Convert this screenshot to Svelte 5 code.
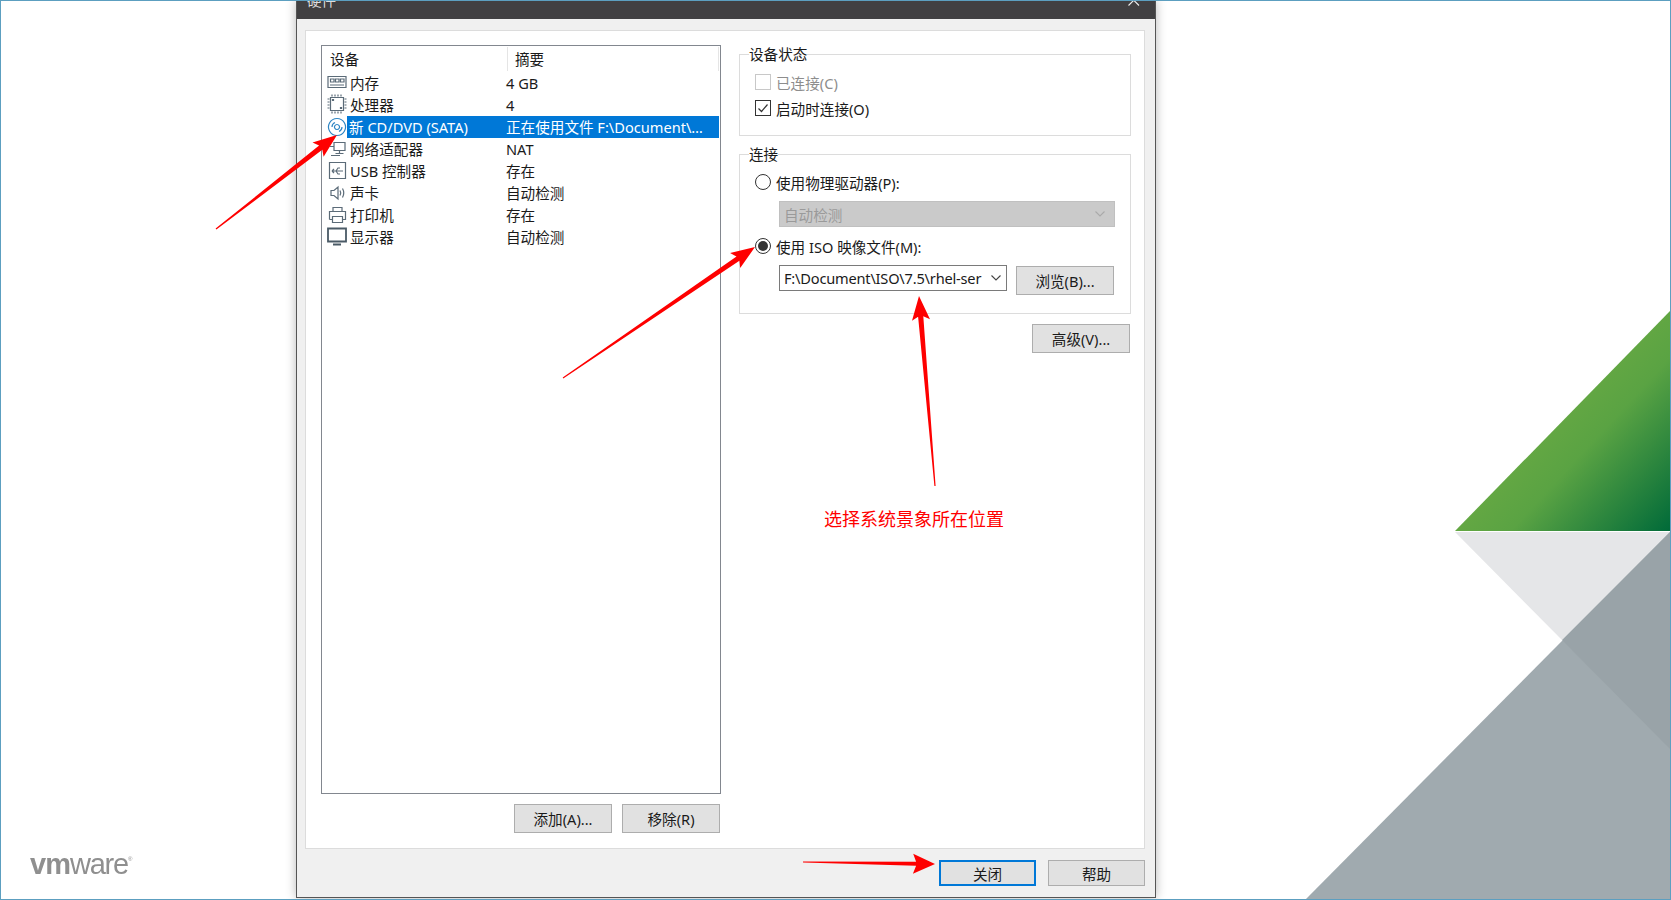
<script lang="ts">
  const rows = [
    { name: '内存', value: '4 GB', color: '#5b6b78', d: 'M1 4.5h18v11H1z M3.5 7h3.5v3H3.5z M8.5 7h3.5v3H8.5z M13.5 7h3.5v3h-3.5z M3 13h14' },
    { name: '处理器', value: '4', color: '#5b6b78', d: 'M3.5 3.5h13v13h-13z M5 .5v2 M8 .5v2 M11 .5v2 M14 .5v2 M5 17.5v2 M8 17.5v2 M11 17.5v2 M14 17.5v2 M.5 5h2 M.5 8h2 M.5 11h2 M.5 14h2 M17.5 5h2 M17.5 8h2 M17.5 11h2 M17.5 14h2 M5.5 5.5h1v1h-1z M13.5 13.5h1v1h-1z' },
    { name: '新 CD/DVD (SATA)', value: '正在使用文件 F:\\Document\\…', color: '#2f86c4', d: 'M10 2.5a8.5 8.5 0 1 0 .01 0z M10 8.5a2.5 2.5 0 1 0 .01 0z M5 11a5 5 0 0 1 3-4.5 M15 11a5 5 0 0 1-3 4.5', selected: true },
    { name: '网络适配器', value: 'NAT', color: '#5b6b78', d: 'M7 4.5h11v8H7z M12.5 12.5v3 M8.500 15.500h8 M7 8.500H3 M4 17.500h9' },
    { name: 'USB 控制器', value: '存在', color: '#5b6b78', d: 'M2.500 2.500h16v16h-16z M5 11h11 M5 11l2-2 M5 11l2 2 M9 11l2-3h2 M9 11l2 3h2' },
    { name: '声卡', value: '自动检测', color: '#5b6b78', d: 'M4 8.500v5h3l4 3.500V5L7 8.500z M13 8.500q1.500 2.500 0 5 M15.500 6.500q2.500 4.500 0 9' },
    { name: '打印机', value: '存在', color: '#5b6b78', d: 'M6 7V3.500h9V7 M2.500 15.500V7.500h16v8h-3 M5.500 15.500h-3 M5.500 12.500h10v6h-10z' },
    { name: '显示器', value: '自动检测', color: '#4a5a66', d: 'M1 2.500h18v13H1z M6 18.500h8', heavy: true }
  ];

  // tapered red annotation arrow, wide near the head
  const arrow = (x1: number, y1: number, x2: number, y2: number, head = 24, half = 9, neck = 2.6) => {
    const len = Math.hypot(x2 - x1, y2 - y1);
    const ux = (x2 - x1) / len;
    const uy = (y2 - y1) / len;
    const nx = -uy;
    const ny = ux;
    const bx = x2 - ux * head;
    const by = y2 - uy * head;
    const nbx = x2 - ux * head * 0.86;
    const nby = y2 - uy * head * 0.86;
    const pts = [
      [x1 + nx * 0.6, y1 + ny * 0.6],
      [nbx + nx * neck, nby + ny * neck],
      [bx + nx * half, by + ny * half],
      [x2, y2],
      [bx - nx * half, by - ny * half],
      [nbx - nx * neck, nby - ny * neck],
      [x1 - nx * 0.6, y1 - ny * 0.6]
    ];
    return pts.map((p) => p.map((v) => v.toFixed(1)).join(',')).join(' ');
  };

  const arrows = [
    arrow(216, 229, 337, 135),
    arrow(563, 378, 755, 247),
    arrow(935, 486, 919, 296),
    arrow(803, 862, 935, 864, 22, 10, 2)
  ];
</script>

<div class="page">
  <svg class="backdrop" width="1671" height="900" viewBox="0 0 1671 900" aria-hidden="true">
    <defs>
      <linearGradient id="green" gradientUnits="userSpaceOnUse" x1="1555" y1="425" x2="1670" y2="531">
        <stop offset="0" stop-color="#63a743" />
        <stop offset="0.25" stop-color="#5aa343" />
        <stop offset="1" stop-color="#006a39" />
      </linearGradient>
    </defs>
    <polygon points="1455,531 1670,311 1670,531" fill="url(#green)" />
    <polygon points="1455,532 1670,532 1562,640" fill="#e5e6e8" />
    <polygon points="1305,900 1670,532 1670,900" fill="#a0aaaf" />
    <polygon points="1562,640 1670,532 1670,749" fill="#99a3a8" />
  </svg>

  <aside class="brand"><b>vm</b>ware<sup>®</sup></aside>

  <section class="dialog">
    <header class="titlebar">
      <span class="title">硬件</span>
      <svg class="close-x" width="14" height="19" viewBox="0 0 14 19" aria-hidden="true">
        <path d="M1.500 -5L12 5.500M12 -5L1.500 5.500" stroke="#eee" stroke-width="1.100" fill="none" />
      </svg>
    </header>

    <main class="panel">
      <div class="left">
        <div class="list">
          <div class="list-head">
            <span class="col-name">设备</span>
            <span class="col-value">摘要</span>
          </div>
          {#each rows as row}
            <div class="row">
              <svg class="icon" width="20" height="22" viewBox="0 0 20 22" aria-hidden="true">
                <path d={row.d} fill="none" stroke={row.color} stroke-width={row.heavy ? 1.8 : 1.2} />
              </svg>
              <span class="name" class:selected={row.selected}>{row.name}</span>
              <span class="value" class:selected={row.selected}>{row.value}</span>
            </div>
          {/each}
        </div>
        <div class="list-actions">
          <button class="btn">添加(A)...</button>
          <button class="btn">移除(R)</button>
        </div>
      </div>

      <div class="right">
        <div class="group status">
          <span class="legend">设备状态</span>
          <div class="opt muted">
            <span class="check off"></span>已连接(C)
          </div>
          <div class="opt">
            <span class="check">
              <svg width="14" height="14" viewBox="0 0 14 14" aria-hidden="true">
                <path d="M2.500 7.500l3 3 6-7" fill="none" stroke="#333" stroke-width="1.200" />
              </svg>
            </span>启动时连接(O)
          </div>
        </div>

        <div class="group connect">
          <span class="legend">连接</span>
          <div class="opt radio-row">
            <span class="radio"></span>使用物理驱动器(P):
          </div>
          <div class="select disabled">
            <span>自动检测</span>
            <svg width="12" height="8" viewBox="0 0 12 8" aria-hidden="true">
              <path d="M1.500 1.500L6 6l4.500-4.500" fill="none" stroke="#aaa" stroke-width="1.100" />
            </svg>
          </div>
          <div class="opt radio-row">
            <span class="radio on"></span>使用 ISO 映像文件(M):
          </div>
          <div class="iso-row">
            <div class="select combo">
              <span>F:\Document\ISO\7.5\rhel-ser</span>
              <svg width="12" height="8" viewBox="0 0 12 8" aria-hidden="true">
                <path d="M1.500 1.500L6 6l4.500-4.500" fill="none" stroke="#444" stroke-width="1.100" />
              </svg>
            </div>
            <button class="btn browse">浏览(B)...</button>
          </div>
        </div>

        <div class="advanced">
          <button class="btn">高级(V)...</button>
        </div>
      </div>
    </main>

    <footer class="footer">
      <button class="btn primary">关闭</button>
      <button class="btn">帮助</button>
    </footer>
  </section>

  <span class="note">选择系统景象所在位置</span>

  <svg class="marks" width="1671" height="900" viewBox="0 0 1671 900" aria-hidden="true">
    {#each arrows as pts}
      <polygon points={pts} fill="#fe0000" />
    {/each}
  </svg>
</div>

<style>
  :global(body) {
    margin: 0;
    background: #fff;
  }

  .page {
    position: relative;
    box-sizing: border-box;
    display: flex;
    width: 1671px;
    height: 900px;
    overflow: hidden;
    background: #fff;
    font-family: "Noto Sans", "Noto Sans CJK SC", sans-serif;
    font-size: 14.6px;
    color: #1a1a1a;
  }

  /* thin blue frame of the captured window */
  .page::after {
    content: "";
    position: absolute;
    inset: 0;
    border: 1px solid #5c9fc0;
    pointer-events: none;
  }

  .backdrop,
  .marks {
    position: absolute;
    left: 0;
    top: 0;
    pointer-events: none;
  }

  .brand {
    position: relative;
    box-sizing: border-box;
    width: 296px;
    flex: none;
    align-self: flex-end;
    padding: 0 0 24px 30px;
    font-family: "Liberation Sans", sans-serif;
    font-size: 29px;
    line-height: 24px;
    letter-spacing: -1.2px;
    color: #8f8f8f;
    filter: blur(0.4px);
  }

  .brand b {
    letter-spacing: -1px;
  }

  .brand sup {
    font-size: 6px;
    line-height: 0;
    vertical-align: 13px;
    letter-spacing: 0;
  }

  .dialog {
    position: relative;
    box-sizing: border-box;
    display: flex;
    flex-direction: column;
    width: 860px;
    height: 898px;
    flex: none;
    background: #f0f0f0;
    border: 1px solid #555;
    border-top: none;
    box-shadow: 0 0 10px rgba(0, 0, 0, 0.28);
  }

  .titlebar {
    display: flex;
    justify-content: space-between;
    height: 19px;
    flex: none;
    overflow: hidden;
    background: #414042;
    color: #ddd;
    padding: 0 14px 0 10px;
  }

  .title {
    margin-top: -11px;
    line-height: 22px;
  }

  .panel {
    display: flex;
    box-sizing: border-box;
    width: 840px;
    height: 819px;
    margin: 11px 0 0 8px;
    padding: 14px 0 0 15px;
    background: #fff;
    border: 1px solid #dcdcdc;
  }

  .left {
    display: flex;
    flex-direction: column;
    width: 400px;
    flex: none;
  }

  .list {
    box-sizing: border-box;
    height: 749px;
    border: 1px solid #82878f;
  }

  .list-head {
    display: flex;
    height: 26px;
    line-height: 26px;
  }

  .col-name {
    width: 177px;
    padding-left: 8px;
    border-right: 1px solid #e5e5e5;
    margin: 1px 0;
    line-height: 24px;
  }

  .col-value {
    flex: 1;
    padding-left: 7px;
    margin: 1px 1px 1px 0;
    line-height: 24px;
    border-right: 1px solid #e5e5e5;
  }

  .row {
    display: flex;
    height: 22px;
    line-height: 22px;
    white-space: nowrap;
  }

  .icon {
    margin-left: 5px;
    flex: none;
  }

  .name {
    box-sizing: border-box;
    width: 152px;
    padding-left: 3px;
    flex: none;
  }

  .value {
    flex: 1;
    margin-right: 1px;
    padding-left: 7px;
  }

  .selected {
    background: #0078d7;
    color: #fff;
  }

  .name.selected {
    padding-left: 2px;
  }

  .list-actions {
    display: flex;
    justify-content: flex-end;
    gap: 10px;
    margin-top: 10px;
    padding-right: 1px;
  }

  .btn {
    box-sizing: border-box;
    width: 98px;
    height: 29px;
    padding: 0;
    background: #e1e1e1;
    border: 1px solid #adadad;
    font: inherit;
    color: #1a1a1a;
  }

  .right {
    width: 392px;
    margin-left: 18px;
    flex: none;
  }

  .group {
    position: relative;
    box-sizing: border-box;
    border: 1px solid #dcdcdc;
  }

  .status {
    height: 82px;
    margin-top: 9px;
    padding: 14px 0 0 15px;
  }

  .connect {
    height: 160px;
    margin-top: 18px;
    padding: 15px 0 0 15px;
  }

  .legend {
    position: absolute;
    left: 9px;
    top: -12px;
    padding: 0 0 0 0;
    background: #fff;
    line-height: 22px;
  }

  .opt {
    display: flex;
    align-items: center;
    height: 26px;
    gap: 5px;
  }

  .muted {
    color: #8d8d8d;
  }

  .check {
    box-sizing: border-box;
    display: block;
    width: 16px;
    height: 16px;
    border: 1px solid #333;
  }

  .check.off {
    border-color: #c8c8c8;
  }

  .check svg {
    display: block;
  }

  .radio-row {
    height: 24px;
  }

  .radio {
    position: relative;
    box-sizing: border-box;
    display: block;
    width: 16px;
    height: 16px;
    border: 1px solid #333;
    border-radius: 50%;
  }

  .radio.on::after {
    content: "";
    position: absolute;
    inset: 2px;
    border-radius: 50%;
    background: #333;
  }

  .select {
    box-sizing: border-box;
    display: flex;
    align-items: center;
    justify-content: space-between;
    height: 26px;
    padding: 0 8px 0 4px;
    white-space: nowrap;
  }

  .disabled {
    width: 336px;
    margin: 7px 0 7px 24px;
    background: #cacaca;
    border: 1px solid #c0c0c0;
    color: #9a9a9a;
  }

  .iso-row {
    display: flex;
    gap: 9px;
    margin: 7px 0 0 24px;
    align-items: flex-start;
  }

  .combo {
    width: 228px;
    background: #fff;
    border: 1px solid #7a7a7a;
    padding-right: 4px;
    letter-spacing: -0.2px;
  }

  .browse {
    margin-top: 1px;
  }

  .advanced {
    display: flex;
    justify-content: flex-end;
    margin-top: 10px;
    padding-right: 1px;
  }

  .footer {
    display: flex;
    justify-content: flex-end;
    gap: 12px;
    margin-top: 11px;
    padding-right: 10px;
  }

  .footer .btn {
    width: 97px;
    height: 26px;
  }

  .primary {
    border: 2px solid #0078d7;
  }

  .note {
    position: absolute;
    left: 824px;
    top: 506px;
    line-height: 26px;
    font-size: 18px;
    color: #f00;
  }
</style>
